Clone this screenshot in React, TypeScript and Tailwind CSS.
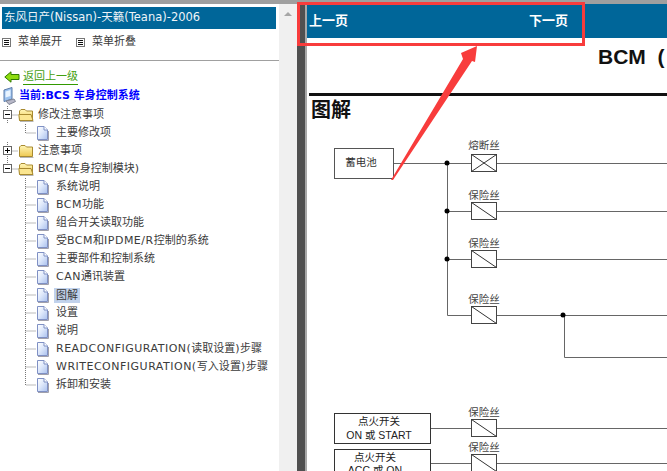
import React from "react";

const font = { cjk: "font-['DejaVu_Sans','Noto_Sans_CJK_SC',sans-serif]" };

function Doc() {
  return (
    <svg width="13" height="15" viewBox="0 0 13 15" className="shrink-0">
      <defs>
        <linearGradient id="docFill" x1="0" y1="0" x2="1" y2="1">
          <stop offset="0" stopColor="#ffffff" />
          <stop offset="0.45" stopColor="#dfe9fb" />
          <stop offset="1" stopColor="#a9c0ee" />
        </linearGradient>
      </defs>
      <path d="M1.5 .5H8L11.5 4V13.5H1.5Z" fill="url(#docFill)" stroke="#7f90c4" />
      <path d="M8 .5V4H11.5" fill="#fff" stroke="#7f90c4" />
      <path d="M2 14.5H12.5V5" fill="none" stroke="#a0a0ac" />
    </svg>
  );
}

function Folder({ open }: { open?: boolean }) {
  return (
    <svg width="16" height="14" viewBox="0 0 16 14" className="shrink-0">
      <defs>
        <linearGradient id="folderFill" x1="0" y1="0" x2="0" y2="1">
          <stop offset="0" stopColor="#fff6b8" />
          <stop offset="1" stopColor="#eec850" />
        </linearGradient>
      </defs>
      <path d="M1.5 12.5V3L3 1.5H7L8.5 3H14.5V12.5Z" fill="url(#folderFill)" stroke="#a88a30" />
      {open && <path d="M1.5 12.5L0.8 6.5H13L15 12.5Z" fill="#fbe690" stroke="#a88a30" />}
      <path d="M2 13.5H15.5" stroke="#b5b5b5" />
    </svg>
  );
}

// dotted guide + expander box on top level rows
function RootGuide({ sign, last }: { sign: "+" | "-"; last?: boolean }) {
  return (
    <svg width="18" height="18" viewBox="0 0 18 18" className="shrink-0">
      <path d={last ? "M7.5 0V9H18" : "M7.5 0V18M7.5 9H18"} stroke="#777" strokeDasharray="1 1" fill="none" />
      <rect x="3.5" y="4.5" width="8" height="8" fill="#fff" stroke="#666" />
      <path d="M5 8.5H10" stroke="#000" />
      {sign === "+" && <path d="M7.5 6V11" stroke="#000" />}
    </svg>
  );
}

function LeafGuide({ last }: { last?: boolean }) {
  return (
    <svg width="36" height="18" viewBox="0 0 36 18" className="shrink-0">
      <path d={last ? "M25.5 0V9H36" : "M25.5 0V18M25.5 9H36"} stroke="#777" strokeDasharray="1 1" fill="none" />
    </svg>
  );
}

function MenuIcon() {
  return (
    <svg width="9" height="9" viewBox="0 0 9 9" className="shrink-0">
      <rect x=".5" y=".5" width="8" height="8" fill="#fff" stroke="#777" />
      <path d="M2 2.5H7M2 4.5H7M2 6.5H7" stroke="#111" />
    </svg>
  );
}

function Leaf({ label, last, selected }: { label: React.ReactNode; last?: boolean; selected?: boolean }) {
  return (
    <div className="flex h-[18px] items-center">
      <LeafGuide last={last} />
      <Doc />
      <span className={selected ? "ml-[5px] bg-[#c1d2ec] px-[2px] leading-[15px]" : "ml-[7px]"}>{label}</span>
    </div>
  );
}

function Group({ label, sign, last }: { label: React.ReactNode; sign: "+" | "-"; last?: boolean }) {
  return (
    <div className="flex h-[18px] items-center">
      <RootGuide sign={sign} last={last} />
      <Folder open={sign === "-"} />
      <span className="ml-[4px]">{label}</span>
    </div>
  );
}

const L = ({ children }: { children: React.ReactNode }) => (
  <span className="tracking-[0.5px]">{children}</span>
);

const bcmItems: React.ReactNode[] = [
  "系统说明",
  <><L>BCM</L>功能</>,
  "组合开关读取功能",
  <>受<L>BCM</L>和<L>IPDME/R</L>控制的系统</>,
  "主要部件和控制系统",
  <><L>CAN</L>通讯装置</>,
];

const bcmItems2: React.ReactNode[] = [
  "设置",
  "说明",
  <><L>READCONFIGURATION(</L>读取设置<L>)</L>步骤</>,
  <span className="tracking-[0.1px]"><L>WRITECONFIGURATION(</L>写入设置<L>)</L>步骤</span>,
];

function Fuse({ y, label, cross }: { y: number; label: string; cross?: boolean }) {
  return (
    <g>
      <text x="484" y={cross ? y - 14 : y - 12.5} textAnchor="middle" fontSize="10.5" fill="#444">{label}</text>
      <rect x="471.5" y={y - 8.5} width="25" height="17" fill="#fff" stroke="#444" />
      <path d={`M471.5 ${y - 8.5}L496.5 ${y + 8.5}`} stroke="#333" />
      {cross && <path d={`M471.5 ${y + 8.5}L496.5 ${y - 8.5}`} stroke="#333" />}
    </g>
  );
}

function Diagram() {
  return (
    <svg width="360" height="341" viewBox="307 130 360 341" className="mt-[5px] block font-['Liberation_Sans','Noto_Sans_CJK_SC',sans-serif]">
      <g stroke="#666" fill="none">
        <path d="M393 163.5H667M447.5 163.5V315.5H667M447.5 211.5H667M447.5 259.5H667M564.5 315.5V357.5H667" />
        <path d="M430 428.5H667M430 463.5H667" />
      </g>
      <circle cx="447" cy="163" r="2.5" fill="#000" />
      <circle cx="447" cy="211" r="2.5" fill="#000" />
      <circle cx="447" cy="259" r="2.5" fill="#000" />
      <circle cx="563" cy="315" r="2.5" fill="#000" />

      <rect x="334.5" y="148.5" width="59" height="30" fill="#fff" stroke="#555" />
      <text x="361" y="166" textAnchor="middle" fontSize="10.5" fill="#333">蓄电池</text>

      <Fuse y={163} label="熔断丝" cross />
      <Fuse y={211} label="保险丝" />
      <Fuse y={259} label="保险丝" />
      <Fuse y={315} label="保险丝" />
      <Fuse y={428} label="保险丝" />
      <Fuse y={463} label="保险丝" />

      <rect x="334.5" y="413.5" width="96" height="30" fill="#fff" stroke="#333" />
      <text x="379" y="425" textAnchor="middle" fontSize="10.5" fill="#222">点火开关</text>
      <text x="379" y="439" textAnchor="middle" fontSize="10.5" fill="#222">ON 或 START</text>
      <rect x="334.5" y="449.5" width="96" height="40" fill="#fff" stroke="#333" />
      <text x="375" y="461" textAnchor="middle" fontSize="10.5" fill="#222">点火开关</text>
      <text x="375" y="474" textAnchor="middle" fontSize="10.5" fill="#222">ACC 或 ON</text>
    </svg>
  );
}

export default function App() {
  return (
    <div className={`relative flex h-[471px] w-[667px] flex-col overflow-hidden bg-white text-[11px] text-[#3b3b3b] ${font.cjk}`}>
      <div className="h-[4px] shrink-0 bg-[#9f9f9f]" />
      <div className="flex min-h-0 flex-1">
        {/* Left tree panel */}
        <div className="w-[279px] shrink-0">
          <div className="mx-[2px] mt-[3px] flex h-[22px] w-[274px] items-center bg-[#006699] pl-[2px] text-[11.5px] text-[#eef4f8]">
            东风日产(Nissan)-天籁(Teana)-2006
          </div>
          <div className="flex h-[31px] items-start pt-[5px] pl-[2px]">
            <span className="mt-[4px]"><MenuIcon /></span>
            <span className="ml-[7px]">菜单展开</span>
            <span className="mt-[4px] ml-[14px]"><MenuIcon /></span>
            <span className="ml-[7px]">菜单折叠</span>
          </div>
          <div className="h-px bg-[#a0a0a0]" />
          <div className="mt-[7px] flex h-[18px] items-center pl-[4px]">
            <svg width="16" height="12" viewBox="0 0 16 12" className="shrink-0">
              <path d="M.8 6L7 .8V3.5H15V8.5H7V11.2Z" fill="#8fdc10" stroke="#2f7a00" />
            </svg>
            <span className="ml-[3px] border-b border-[#339900] leading-[14px] text-[#44a010]">返回上一级</span>
          </div>
          <div className="mt-px flex h-[18px] items-center pl-[3px]">
            <svg width="13" height="18" viewBox="0 0 13 18" className="shrink-0">
              <path d="M1 3L9 .5V12L1 14.5Z" fill="#9cc2ef" stroke="#5a7aa8" />
              <path d="M2.5 4.5L7.5 3V9L2.5 10.5Z" fill="#e9f4ff" />
              <path d="M3 14L11 12L12.5 14.5L6 17.5Z" fill="#b8b8c8" stroke="#7f8494" />
            </svg>
            <span className="ml-[3px] text-[11px] font-bold text-[#0000ff]">当前:BCS 车身控制系统</span>
          </div>
          <div className="mt-px">
            <Group sign="-" label="修改注意事项" />
            <Leaf label="主要修改项" last />
            <Group sign="+" label="注意事项" />
            <Group sign="-" last label={<><L>BCM(</L>车身控制模块<L>)</L></>} />
            {bcmItems.map((item, i) => (
              <Leaf key={i} label={item} />
            ))}
            <Leaf label="图解" selected />
            {bcmItems2.map((item, i) => (
              <Leaf key={i} label={item} />
            ))}
            <Leaf label="拆卸和安装" last />
          </div>
        </div>

        {/* Scrollbar */}
        <div className="flex w-[18px] shrink-0 justify-center bg-[#f0f0f0] pt-[8px]">
          <div className="h-0 w-0 border-x-[4px] border-b-[4px] border-x-transparent border-b-[#a6a6a6]" />
        </div>

        {/* Splitter */}
        <div className="w-[8px] shrink-0 bg-[#505050]" />
        <div className="w-[2px] shrink-0 bg-[#a8a8a8]" />

        {/* Document */}
        <div className="min-w-0 flex-1 overflow-hidden">
          <div className="flex h-[34px] items-center bg-[#006699] text-[13px] font-bold text-white">
            <span className="ml-[2px] w-[220px]">上一页</span>
            <span>下一页</span>
          </div>
          <div className="mt-[4px] h-[30px] whitespace-pre pl-[291px] font-['Liberation_Sans',sans-serif] text-[21px] leading-[30px] font-bold text-[#111]">
            BCM  (
          </div>
          <div className="mt-[21px] ml-[2px] h-[3px] bg-[#111]" />
          <div className="h-[29px] pl-[4px] text-[20px] leading-[29px] font-bold text-[#111]">图解</div>
          <Diagram />
        </div>
      </div>

      {/* Red annotation */}
      <div className="absolute top-[2px] left-[297px] h-[44px] w-[288px] border-[3px] border-[#f83c3c]" />
      <svg width="667" height="471" className="absolute top-0 left-0">
        <path d="M391 180L463 59L461 53L477 46L475 62L472 61L393 180Z" fill="#f83c3c" />
      </svg>
    </div>
  );
}
